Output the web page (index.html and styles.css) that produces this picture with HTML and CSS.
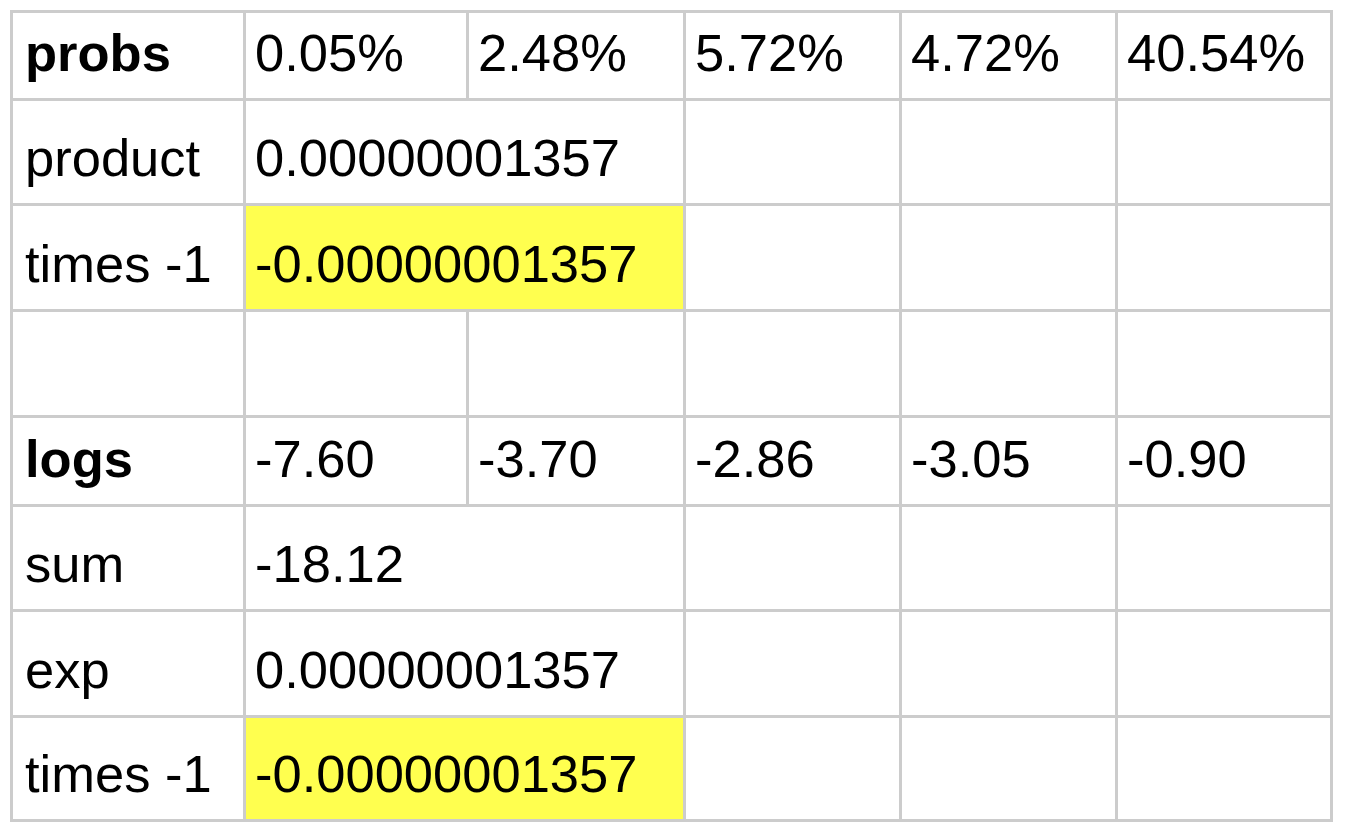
FILE: index.html
```html
<!DOCTYPE html>
<html lang="en">
<head>
<meta charset="utf-8">
<title>probs and logs</title>
<link rel="stylesheet" href="styles.css">
</head>
<body>
<div class="sheet">
  <div class="cell label bold">probs</div>
  <div class="cell">0.05%</div>
  <div class="cell">2.48%</div>
  <div class="cell">5.72%</div>
  <div class="cell">4.72%</div>
  <div class="cell">40.54%</div>

  <div class="cell label">product</div>
  <div class="cell span2">0.00000001357</div>
  <div class="cell"></div>
  <div class="cell"></div>
  <div class="cell"></div>

  <div class="cell label">times -1</div>
  <div class="cell span2 hl">-0.00000001357</div>
  <div class="cell"></div>
  <div class="cell"></div>
  <div class="cell"></div>

  <div class="cell label"></div>
  <div class="cell"></div>
  <div class="cell"></div>
  <div class="cell"></div>
  <div class="cell"></div>
  <div class="cell"></div>

  <div class="cell label bold">logs</div>
  <div class="cell">-7.60</div>
  <div class="cell">-3.70</div>
  <div class="cell">-2.86</div>
  <div class="cell">-3.05</div>
  <div class="cell">-0.90</div>

  <div class="cell label">sum</div>
  <div class="cell span2">-18.12</div>
  <div class="cell"></div>
  <div class="cell"></div>
  <div class="cell"></div>

  <div class="cell label">exp</div>
  <div class="cell span2">0.00000001357</div>
  <div class="cell"></div>
  <div class="cell"></div>
  <div class="cell"></div>

  <div class="cell label">times -1</div>
  <div class="cell span2 hl">-0.00000001357</div>
  <div class="cell"></div>
  <div class="cell"></div>
  <div class="cell"></div>
</div>
</body>
</html>
```

FILE: styles.css
```css
html, body {
  margin: 0;
  padding: 0;
  background: #ffffff;
}

body {
  padding: 10px 0 0 10px;
  font-family: "Liberation Sans", Arial, sans-serif;
  color: #000000;
}

.sheet {
  display: grid;
  grid-template-columns: 230px 220px 214px 213px 213px 212px;
  grid-template-rows: 85px 102px 103px 103px 86px 102px 103px 101px;
  gap: 3px;
  padding: 3px;
  background: #cccccc;
  width: max-content;
}

.cell {
  background: #ffffff;
  display: flex;
  align-items: flex-end;
  padding: 0 0 15px 9px;
  font-size: 52.5px;
  line-height: 60px;
  white-space: nowrap;
  overflow: hidden;
}

.label {
  padding-left: 12px;
}

.bold {
  font-weight: bold;
}

.span2 {
  grid-column: span 2;
}

.hl {
  background: #ffff4f;
}
```
